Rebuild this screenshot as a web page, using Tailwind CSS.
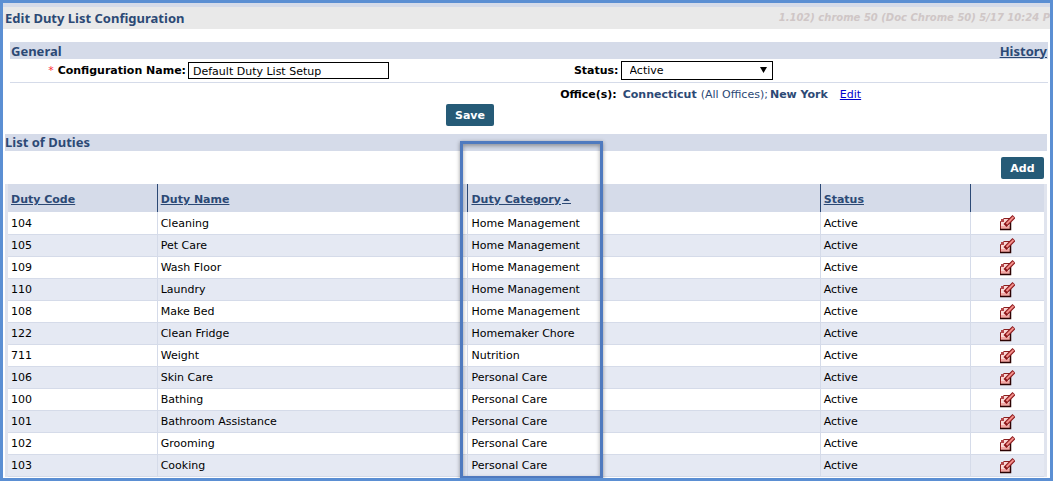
<!DOCTYPE html>
<html lang="en">
<head>
<meta charset="utf-8">
<meta name="viewport" content="width=device-width, initial-scale=1">
<title>Edit Duty List Configuration</title>
<script src="https://cdn.jsdelivr.net/npm/@tailwindcss/browser@4"></script>
</head>
<body class="min-h-screen overflow-x-hidden border-3 border-[#5b8fd3] bg-white font-['DejaVu_Sans',Verdana,sans-serif] text-[11px] leading-4 text-black">
<svg class="hidden" aria-hidden="true">
  <symbol id="edit" viewBox="0 0 16 16">
    <path d="M1.500 14.500V6.500L5 3.500H11.500V14.500Z" fill="#fbd9d6" stroke="#8a1f1f"/>
    <path d="M2 11H11V14H2Z" fill="#f3a9a5"/>
    <path d="M2 4H5V7H2Z" fill="#b5474a"/>
    <path d="M1 14.500H11.500V7" fill="none" stroke="#2c0303" stroke-width="1.500"/>
    <path d="M6 10.500 15 1.500" fill="none" stroke="#8a1518" stroke-width="4.200"/>
    <path d="M7.500 9 14.500 2" fill="none" stroke="#f28e8a" stroke-width="2"/>
  </symbol>
</svg>
<header class="flex h-[26px] items-center justify-between overflow-hidden border-t-4 border-[#d5dbe9] bg-[#e9e9e9]">
  <h1 class="pl-0.5 font-['Noto_Sans',Tahoma,sans-serif] text-[13px] font-bold text-[#2c4975]">Edit Duty List Configuration</h1>
  <div class="text-[10px] font-bold whitespace-nowrap text-[#cfc6c6] italic">1.102) chrome 50 (Doc Chrome 50) 5/17 10:24 P</div>
</header>
<main>
  <section class="mt-[13px] mr-0.5 ml-[7px]">
    <div class="flex h-[17px] items-center justify-between bg-[#d5dbe9] px-px font-['Noto_Sans',Tahoma,sans-serif] text-[13px] font-bold text-[#2c4975]">
      <h2>General</h2>
      <a href="#" class="underline">History</a>
    </div>
    <form>
      <div class="flex h-6 items-center border-b border-[#d5dbe9]">
        <div class="flex w-[54%] items-center">
          <label for="name" class="w-[178px] pr-0.5 text-right font-bold whitespace-nowrap"><span class="mr-1 font-normal text-red-500">*</span>Configuration Name:</label>
          <input id="name" value="Default Duty List Setup" class="h-[17px] w-[201px] border border-black px-1 pt-px">
        </div>
        <div class="flex items-center">
          <label for="status" class="w-[50px] pr-0.5 text-right font-bold">Status:</label>
          <div class="relative">
            <select id="status" class="block h-[19px] w-[152px] appearance-none border border-black bg-white px-2 pt-px leading-4"><option>Active</option></select>
            <svg class="pointer-events-none absolute top-[6px] right-[6px] h-[6px] w-[7px]" viewBox="0 0 7 6"><path d="M0 0H7L3.500 6Z"/></svg>
          </div>
        </div>
      </div>
      <div class="flex h-[21px] items-center gap-1 pt-0.5 pl-[53%] whitespace-nowrap text-[#2c4975]">
        <b class="mr-0.5 text-black">Office(s):</b><b>Connecticut</b><span>(All Offices);<b class="ml-0.5">New York</b></span><a href="#" class="ml-2 text-[#0000cc] underline">Edit</a>
      </div>
      <div class="flex justify-center pr-[118px]">
        <button class="h-[22px] w-12 rounded-xs bg-[#265b77] pt-px font-bold text-white">Save</button>
      </div>
    </form>
  </section>
  <section class="mr-[3px] ml-0.5">
    <h2 class="mt-2 h-[17px] bg-[#d5dbe9] font-['Noto_Sans',Tahoma,sans-serif] text-[13px] leading-[17px] font-bold text-[#2c4975]">List of Duties</h2>
    <div class="flex justify-end pt-[6px] pr-[3px] pb-[5px]">
      <button class="h-[22px] w-[43px] rounded-xs bg-[#265b77] pt-px font-bold text-white">Add</button>
    </div>
    <div class="border-x-3 border-[#e0e4ee]">
    <table class="w-full table-fixed border-collapse text-left">
      <colgroup><col class="w-[14.4%]"><col class="w-[30%]"><col class="w-[34%]"><col class="w-[14.5%]"><col></colgroup>
      <thead class="bg-[#d5dbe9] text-[#2c4975]">
        <tr class="h-7">
          <th class="px-[3px] pt-1"><a href="#" class="underline">Duty Code</a></th>
          <th class="border-l border-[#2c4975] px-[3px] pt-1"><a href="#" class="underline">Duty Name</a></th>
          <th class="relative border-l border-[#2c4975] px-[3px] pt-1"><a href="#" class="underline">Duty Category<svg class="ml-px inline h-2 w-[9px]" viewBox="0 0 9 8"><path d="M1 5 4.500 2 8 5ZM0 7H9V8H0Z" fill="#2c4975"/></svg></a>
            <div class="pointer-events-none absolute -top-[43px] -left-2 h-[338px] w-[143px] border-3 border-[#4f7abf] shadow-[0_1px_4px_rgba(0,0,0,0.4),inset_0_2px_4px_rgba(0,0,0,0.35)]"></div>
          </th>
          <th class="border-l border-[#2c4975] px-[3px] pt-1"><a href="#" class="underline">Status</a></th>
          <th class="border-l border-[#2c4975]" aria-label="Actions"></th>
        </tr>
      </thead>
      <tbody id="rows"></tbody>
    </table>
    </div>
  </section>
</main>
<script>
const duties = [
  ["104", "Cleaning", "Home Management"],
  ["105", "Pet Care", "Home Management"],
  ["109", "Wash Floor", "Home Management"],
  ["110", "Laundry", "Home Management"],
  ["108", "Make Bed", "Home Management"],
  ["122", "Clean Fridge", "Homemaker Chore"],
  ["711", "Weight", "Nutrition"],
  ["106", "Skin Care", "Personal Care"],
  ["100", "Bathing", "Personal Care"],
  ["101", "Bathroom Assistance", "Personal Care"],
  ["102", "Grooming", "Personal Care"],
  ["103", "Cooking", "Personal Care"]
];
document.getElementById("rows").innerHTML = duties.map(([code, name, category]) => `
  <tr class="h-[22px] border-b border-[#d5dbe9] even:bg-[#e5e9f3]">
    <td class="px-[3px] pt-0.5">${code}</td>
    <td class="border-l border-[#d5dbe9] px-[3px] pt-0.5">${name}</td>
    <td class="border-l border-[#d5dbe9] px-[3px] pt-0.5">${category}</td>
    <td class="border-l border-[#d5dbe9] px-[3px] pt-0.5">Active</td>
    <td class="border-l border-[#d5dbe9] pt-px"><button class="mx-auto block h-4 w-4" aria-label="Edit ${name}"><svg class="h-4 w-4"><use href="#edit"/></svg></button></td>
  </tr>`).join("");
</script>
</body>
</html>
